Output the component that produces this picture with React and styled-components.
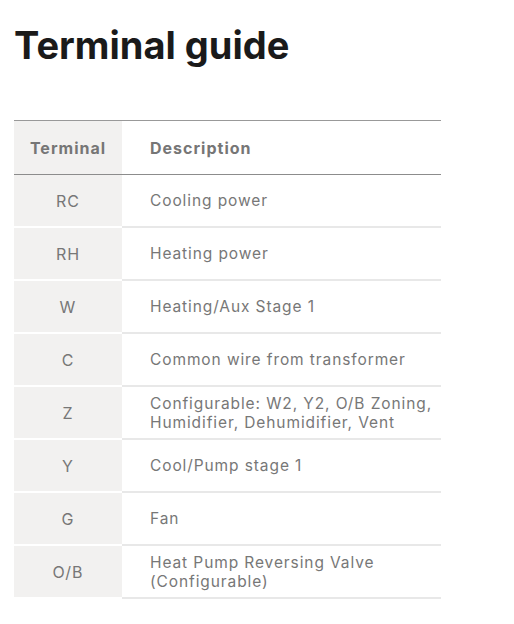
import React from 'react'
import styled, { createGlobalStyle } from 'styled-components'

const GlobalStyle = createGlobalStyle`
    body {
        margin: 0;
        background: #fff;
        font-family: "Inter", "Liberation Sans", sans-serif;
    }
`

const rows = [
    ['RC', 'Cooling power'],
    ['RH', 'Heating power'],
    ['W', 'Heating/Aux Stage 1'],
    ['C', 'Common wire from transformer'],
    ['Z', 'Configurable: W2, Y2, O/B Zoning, Humidifier, Dehumidifier, Vent'],
    ['Y', 'Cool/Pump stage 1'],
    ['G', 'Fan'],
    ['O/B', 'Heat Pump Reversing Valve (Configurable)'],
]

function App() {
    return (
        <Page>
            <GlobalStyle />
            <Title>Terminal guide</Title>
            <Table>
                <thead>
                    <tr>
                        <HeadCell $first>Terminal</HeadCell>
                        <HeadCell>Description</HeadCell>
                    </tr>
                </thead>
                <tbody>
                    {rows.map(([term, desc]) => (
                        <tr key={term}>
                            <TermCell>{term}</TermCell>
                            <DescCell>{desc}</DescCell>
                        </tr>
                    ))}
                </tbody>
            </Table>
        </Page>
    )
}

const Page = styled.div`
    padding: 23px 14px 20px;
`

const Title = styled.h1`
    margin: 0 0 53px;
    font-size: 38px;
    line-height: 44px;
    font-weight: 700;
    color: #1a1a1a;
    letter-spacing: 0;
`

const Table = styled.table`
    width: 427px;
    border-collapse: collapse;
    border-top: 1px solid #999;
    color: #777;
`

const HeadCell = styled.th`
    height: 53px;
    padding: 0 ${p => p.$first ? '0' : '28px'};
    width: ${p => p.$first ? '108px' : 'auto'};
    text-align: ${p => p.$first ? 'center' : 'left'};
    background: ${p => p.$first ? '#f2f1f0' : '#fff'};
    border-bottom: 1px solid #8c8c8c;
    font-size: 16px;
    font-weight: 700;
    color: #767676;
    letter-spacing: 1px;
`

const TermCell = styled.td`
    height: 51px;
    padding: 0;
    text-align: center;
    background: #f2f1f0;
    border-bottom: 2px solid #fff;
    font-size: 16px;
    letter-spacing: 1px;
`

const DescCell = styled.td`
    height: 51px;
    padding: 0 8px 0 28px;
    border-bottom: 2px solid #e8e8e8;
    font-size: 15.5px;
    line-height: 19px;
    letter-spacing: 0.9px;
`

export default App
